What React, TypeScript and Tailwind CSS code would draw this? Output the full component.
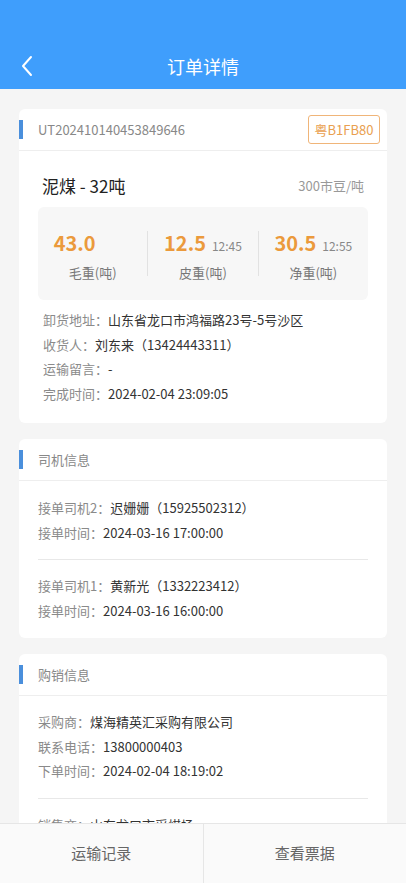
import React from "react"

const font = { fontFamily: '"Noto Sans CJK SC", "Noto Sans", sans-serif' }

function CardHeader({ children }: { children: React.ReactNode }) {
  return (
    <div className="flex h-[42px] items-center border-b border-[#eeeeee]">
      <div className="h-[19px] w-[4px] bg-[#4a8fdc]" />
      <div className="ml-[15px] flex-1 text-[13px] text-[#888]">{children}</div>
    </div>
  )
}

function Line({ label, value }: { label: string; value: string }) {
  return (
    <div className="text-[13px] leading-[24.5px]">
      <span className="text-[#8a8a8a]">{label}：</span>
      <span className="text-[#333]">{value}</span>
    </div>
  )
}

function Weight({ value, time, label, last }: { value: string; time?: string; label: string; last?: boolean }) {
  return (
    <div className={`flex flex-1 flex-col items-center ${last ? "" : "border-r border-[#e2e2e2]"} my-[24px]`}>
      <div className="flex items-baseline gap-[6px]">
        <span className="text-[20px] font-bold leading-[24px] text-[#eb9a3c]">{value}</span>
        <span className={`text-[12px] text-[#888] ${time ? "" : "invisible"}`}>{time || "12:45"}</span>
      </div>
      <div className="mt-[8px] text-[13px] leading-[20px] text-[#777]">{label}</div>
    </div>
  )
}

export default function App() {
  return (
    <div className="min-h-screen bg-[#f5f5f5] pb-[80px]" style={font}>
      <div className="bg-[#3f9efc] pt-[44px]">
        <div className="relative flex h-[45px] items-center justify-center">
          <svg className="absolute left-[20px] top-[11px]" width="14" height="22" viewBox="0 0 14 22">
            <polyline points="11,2 3,11 11,20" fill="none" stroke="white" strokeWidth="2" strokeLinecap="round" strokeLinejoin="round" />
          </svg>
          <span className="text-[18px] text-white">订单详情</span>
        </div>
      </div>

      <div className="mx-[19px] mt-[20px] rounded-[6px] bg-white">
        <div className="flex h-[42px] items-center border-b border-[#eeeeee]">
          <div className="h-[19px] w-[4px] bg-[#4a8fdc]" />
          <div className="ml-[15px] flex-1 text-[13px] text-[#888]">UT202410140453849646</div>
          <div className="mr-[7px] flex h-[29px] w-[72px] items-center justify-center rounded-[3px] border border-[#f0b579] text-[13px] text-[#e9a04f]">
            粤B1FB80
          </div>
        </div>
        <div className="px-[19px] pb-[17px] pt-[23px]">
          <div className="flex items-center justify-between px-[4px]">
            <span className="text-[17px] leading-[24px] text-[#222]">泥煤 - 32吨</span>
            <span className="text-[13px] text-[#999]">300市豆/吨</span>
          </div>
          <div className="mt-[9px] flex h-[93px] rounded-[6px] bg-[#f7f7f7]">
            <Weight value="43.0" label="毛重(吨)" />
            <Weight value="12.5" time="12:45" label="皮重(吨)" />
            <Weight value="30.5" time="12:55" label="净重(吨)" last />
          </div>
          <div className="mt-[8px] px-[5px]">
            <Line label="卸货地址" value="山东省龙口市鸿福路23号-5号沙区" />
            <Line label="收货人" value="刘东来（13424443311）" />
            <Line label="运输留言" value="-" />
            <Line label="完成时间" value="2024-02-04 23:09:05" />
          </div>
        </div>
      </div>

      <div className="mx-[19px] mt-[16px] rounded-[6px] bg-white">
        <CardHeader>司机信息</CardHeader>
        <div className="px-[19px] pb-[15px] pt-[15px]">
          <Line label="接单司机2" value="迟姗姗（15925502312）" />
          <Line label="接单时间" value="2024-03-16 17:00:00" />
          <div className="my-[14px] border-t border-[#e8e8e8]" />
          <Line label="接单司机1" value="黄新光（1332223412）" />
          <Line label="接单时间" value="2024-03-16 16:00:00" />
        </div>
      </div>

      <div className="mx-[19px] mt-[16px] rounded-[6px] bg-white">
        <CardHeader>购销信息</CardHeader>
        <div className="px-[19px] pb-[15px] pt-[14px]">
          <Line label="采购商" value="煤海精英汇采购有限公司" />
          <Line label="联系电话" value="13800000403" />
          <Line label="下单时间" value="2024-02-04 18:19:02" />
          <div className="my-[14px] border-t border-[#e8e8e8]" />
          <Line label="销售商" value="山东龙口市采煤场" />
          <Line label="联系电话" value="13800000402" />
          <Line label="下单时间" value="2024-02-04 18:19:02" />
        </div>
      </div>

      <div className="fixed inset-x-0 bottom-0 flex h-[60px] border-t border-[#e6e6e6] bg-[#fafafa]">
        <div className="flex flex-1 items-center justify-center border-r border-[#e6e6e6] text-[15px] text-[#666]">运输记录</div>
        <div className="flex flex-1 items-center justify-center text-[15px] text-[#666]">查看票据</div>
      </div>
    </div>
  )
}
